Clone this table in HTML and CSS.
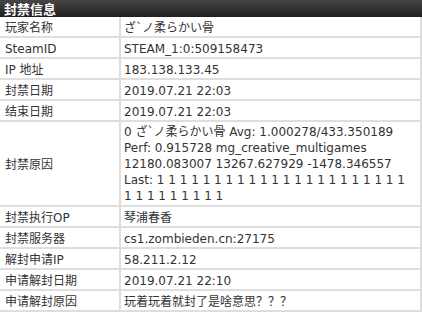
FILE: index.html
```html
<!DOCTYPE html>
<html>
<head>
<meta charset="utf-8">
<link rel="stylesheet" href="styles.css">
</head>
<body>
<div class="panel">
  <div class="panel-head">封禁信息</div>
  <table class="info">
    <tr><td class="k">玩家名称</td><td class="v">ざ`ノ柔らかい骨</td></tr>
    <tr><td class="k">SteamID</td><td class="v">STEAM_1:0:509158473</td></tr>
    <tr><td class="k">IP 地址</td><td class="v">183.138.133.45</td></tr>
    <tr><td class="k">封禁日期</td><td class="v">2019.07.21 22:03</td></tr>
    <tr><td class="k">结束日期</td><td class="v">2019.07.21 22:03</td></tr>
    <tr><td class="k">封禁原因</td><td class="v reason">0 ざ`ノ柔らかい骨 Avg: 1.000278/433.350189<br>Perf: 0.915728 mg_creative_multigames<br>12180.083007 13267.627929 -1478.346557<br>Last: 1 1 1 1 1 1 1 1 1 1 1 1 1 1 1 1 1 1 1 1 1 1<br>1 1 1 1 1 1 1 1 1</td></tr>
    <tr><td class="k">封禁执行OP</td><td class="v">琴浦春香</td></tr>
    <tr><td class="k">封禁服务器</td><td class="v">cs1.zombieden.cn:27175</td></tr>
    <tr><td class="k">解封申请IP</td><td class="v">58.211.2.12</td></tr>
    <tr><td class="k">申请解封日期</td><td class="v">2019.07.21 22:10</td></tr>
    <tr><td class="k">申请解封原因</td><td class="v">玩着玩着就封了是啥意思？？？</td></tr>
  </table>
</div>
</body>
</html>
```
FILE: styles.css
```css
html, body {
  margin: 0;
  padding: 0;
  background: #fff;
}
.panel {
  width: 422px;
  font-family: "DejaVu Sans", "Noto Sans CJK SC", sans-serif;
  font-size: 12px;
  color: #333;
}
.panel-head {
  height: 17px;
  line-height: 17px;
  padding-left: 4px;
  background: linear-gradient(#464646, #1f1f1f);
  color: #fff;
  font-weight: bold;
  font-size: 13px;
  font-family: "Noto Sans CJK SC", sans-serif;
}
.info {
  width: 422px;
  border-collapse: separate;
  border-spacing: 0;
}
.info td {
  padding: 3px 4px 0 4px;
  line-height: 16px;
  border-bottom: 2px solid #dedede;
  vertical-align: middle;
}
.info .k {
  width: 110px;
  padding-left: 5px;
  border-right: 2px solid #dedede;
}
.info .v {
  padding-left: 3px;
  padding-right: 1px;
  border-right: 2px solid #dedede;
}
.info .reason {
  white-space: nowrap;
  padding-top: 2px;
  padding-bottom: 1px;
}
```
